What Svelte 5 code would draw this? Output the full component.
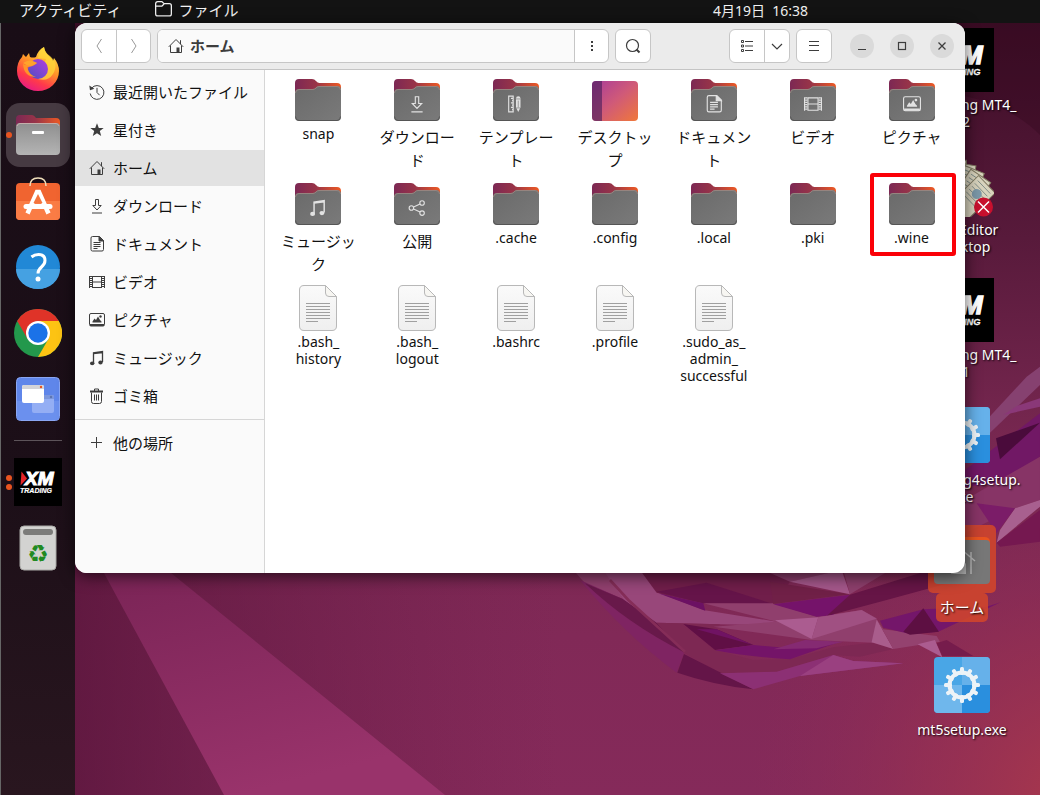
<script>
  const places = [
    { id: 'recent', icon: 'history', name: '最近開いたファイル' },
    { id: 'starred', icon: 'star', name: '星付き' },
    { id: 'home', icon: 'home', name: 'ホーム' },
    { id: 'downloads', icon: 'download', name: 'ダウンロード' },
    { id: 'documents', icon: 'doc', name: 'ドキュメント' },
    { id: 'videos', icon: 'film', name: 'ビデオ' },
    { id: 'pictures', icon: 'picture', name: 'ピクチャ' },
    { id: 'music', icon: 'music', name: 'ミュージック' },
    { id: 'trash', icon: 'trash', name: 'ゴミ箱' }
  ];

  const files = [
    { kind: 'folder', name: 'snap' },
    { kind: 'folder', emblem: 'download', name: 'ダウンロー\nド', cjk: true },
    { kind: 'folder', emblem: 'template', name: 'テンプレー\nト', cjk: true },
    { kind: 'desktop', name: 'デスクトッ\nプ', cjk: true },
    { kind: 'folder', emblem: 'doc', name: 'ドキュメン\nト', cjk: true },
    { kind: 'folder', emblem: 'film', name: 'ビデオ', cjk: true },
    { kind: 'folder', emblem: 'picture', name: 'ピクチャ', cjk: true },
    { kind: 'folder', emblem: 'music', name: 'ミュージッ\nク', cjk: true },
    { kind: 'folder', emblem: 'share', name: '公開', cjk: true },
    { kind: 'folder', name: '.cache' },
    { kind: 'folder', name: '.config' },
    { kind: 'folder', name: '.local' },
    { kind: 'folder', name: '.pki' },
    { kind: 'folder', name: '.wine', marked: true },
    { kind: 'text', name: '.bash_\nhistory' },
    { kind: 'text', name: '.bash_\nlogout' },
    { kind: 'text', name: '.bashrc' },
    { kind: 'text', name: '.profile' },
    { kind: 'text', name: '.sudo_as_\nadmin_\nsuccessful' }
  ];

  const shortcuts = [
    { kind: 'xm', name: 'XMTrading MT4_\n02' },
    { kind: 'editor', name: 'MetaEditor\n.desktop' },
    { kind: 'xm', name: 'XMTrading MT4_\n01' },
    { kind: 'gear', name: 'xmtrading4setup.\nexe' },
    { kind: 'home', name: 'ホーム', cjk: true },
    { kind: 'gear', name: 'mt5setup.exe' }
  ];

  const dock = [
    { kind: 'firefox', name: 'Firefox', dots: 0 },
    { kind: 'files', name: 'ファイル', dots: 1 },
    { kind: 'software', name: 'Ubuntu Software', dots: 0 },
    { kind: 'help', name: 'ヘルプ', dots: 0 },
    { kind: 'chrome', name: 'Google Chrome', dots: 0 },
    { kind: 'windows', name: 'ウィンドウ', dots: 0 },
    { kind: 'separator', name: '', dots: 0 },
    { kind: 'xm', name: 'XM Trading', dots: 2 },
    { kind: 'bin', name: 'ゴミ箱', dots: 0 }
  ];

  const teeth = Array.from({ length: 12 }, (_, i) => i * 30);
  const notes = [0, 1, 2, 3, 4];
</script>

{#snippet glyph(name, x = 0, y = 0, size = 16)}
  <svg {x} {y} width={size} height={size} viewBox="0 0 16 16" fill="none" stroke="currentColor" stroke-width="1" aria-hidden="true">
    {#if name === 'history'}
      <path d="M2.6 4.2A6.9 6.9 0 1 1 1.2 9.5M8 3.8V8.5L10.6 11.2" />
      <path d="M.3 1.6 1 6.2 5.4 4.8Z" fill="currentColor" stroke="none" />
    {:else if name === 'star'}
      <path d="M8 1.2 9.8 6h4.9L10.8 9l1.4 5L8 11.2 3.8 14l1.4-5L1.3 6h4.9Z" fill="currentColor" stroke="none" />
    {:else if name === 'home'}
      <path d="M.8 8.8 8 1.5l7.2 7.3M2.5 7.5v7h11v-7M12.5 2.2v4" />
      <path d="M8.5 9.5h3v5h-3z" fill="currentColor" stroke="none" />
    {:else if name === 'download'}
      <path d="M6.5 1.5h3v6h2.7L8 12 3.8 7.5h2.7ZM3 15h10" />
    {:else if name === 'doc'}
      <path d="M3.5.5h7L14.500 4.500V13.500q0 1.500-1.500 1.500H3.500q-1.500 0-1.500-1.500V2Q2 .5 3.500.5ZM4.500 6.500h7M4.500 8.500h7M4.500 10.500h7M4.500 12.500h4" />
      <path d="M10 .5v4.500h4.500Z" fill="currentColor" />
    {:else if name === 'film'}
      <path d="M.5 2v12M15.500 2v12M3.500 2v12M12.500 2v12M3.500 2.500h9M3.500 8h9M3.500 13.500h9" />
      <path d="M2 2v12M14 2v12" stroke-width="2" stroke-dasharray="1 1" />
    {:else if name === 'picture'}
      <rect x=".5" y="1.500" width="15" height="12.500" rx="1.500" />
      <path d="M1 12h14v2H1zM3.500 10.500v-1l2-3 1.500 1.500L9 4.500l2 3.500 1.500 1.500v1z" fill="currentColor" stroke="none" />
      <circle cx="11.500" cy="4.500" r="1.200" fill="currentColor" stroke="none" />
    {:else if name === 'music'}
      <path d="M4.500 13V2.700L13.500 1.500V12M4.500 3.500l9-1" stroke-width="1.300" />
      <ellipse cx="3.200" cy="13.300" rx="2.200" ry="1.900" fill="currentColor" stroke="none" />
      <ellipse cx="11.500" cy="12.500" rx="2.200" ry="1.900" fill="currentColor" stroke="none" />
    {:else if name === 'trash'}
      <path d="M2.500 4.500v9q0 2 2 2h6q2 0 2-2v-9M5.500 6.500v6M7.500 6.500v6M9.500 6.500v6M5.500 3V1h4v2" />
      <path d="M1 3.500h13" stroke-width="2" />
    {:else if name === 'plus'}
      <path d="M7.500 2v11M2 7.500h11" />
    {:else if name === 'template'}
      <path d="M1.500 1h4v14h-4zM3.500 3h2M4.500 5h1M3.500 7h2M4.500 9h1M3.500 11h2M4.500 13h1" />
      <path d="M8 3q0-2 2-2t2 2v8l-2 4-2-4z" fill="currentColor" stroke="none" />
      <path d="M8 3.500h4M8 11.500h4M10 5v6" stroke="#777" stroke-width=".6" />
    {:else if name === 'share'}
      <circle cx="3" cy="8" r="2" /><circle cx="12.500" cy="3.500" r="2" /><circle cx="12.500" cy="12.500" r="2" />
      <path d="m5 7.200 5.700-2.700M5 8.800l5.700 2.700" />
    {:else if name === 'back'}
      <path d="M10.500 1 6 8l4.500 7" />
    {:else if name === 'forward'}
      <path d="M5.500 1 10 8l-4.500 7" />
    {:else if name === 'dots'}
      <path d="M7 3h2v2H7zM7 7h2v2H7zM7 11h2v2H7z" fill="currentColor" stroke="none" />
    {:else if name === 'search'}
      <circle cx="7.500" cy="7.500" r="6" stroke-width="1.200" /><path d="m11.500 11.500 3 3" stroke-width="2" />
    {:else if name === 'list'}
      <path d="M2.500 2.500h2v2h-2zM2.500 7h2v2h-2zM2.500 11.500h2v2h-2zM6 3.500h8M6 8h8M6 12.500h8" />
    {:else if name === 'chevron'}
      <path d="m3 6 5 5 5-5" stroke-width="1.200" />
    {:else if name === 'menu'}
      <path d="M3 3.500h10M3 7.500h10M3 12.500h10" />
    {:else if name === 'minimize'}
      <path d="M4 11.500h8" />
    {:else if name === 'maximize'}
      <rect x="4.500" y="4.500" width="7" height="7" stroke-width="1.200" />
    {:else if name === 'close'}
      <path d="m4.500 4.500 7 7m0-7-7 7" stroke-width="1.300" />
    {:else if name === 'folder'}
      <path d="M.6 3.600Q.6 1.500 2.600 1.500H6.500l2 2h5q1.900 0 1.900 2v7.600q0 1.900-1.900 1.900H2.600q-2 0-2-1.900ZM.8 5.800H6.500l2-2" stroke-width="1.200" />
    {/if}
  </svg>
{/snippet}

{#snippet xmLogo(size)}
  <svg width={size} height={size} viewBox="0 0 48 48" aria-hidden="true">
    <path d="M0 0h48v48H0z" fill="#000" />
    <path d="M7.500 13.500 13 20.500 6.500 27.500Z" fill="#e4252b" />
    <text class="logo" x="11" y="27" font-size="19" fill="#fff" stroke="#fff" stroke-width="1.100">XM</text>
    <text class="logo" x="6" y="35" font-size="7" fill="#fff" stroke="#fff" stroke-width=".2">TRADING</text>
  </svg>
{/snippet}

{#snippet folder(emblem)}
  <svg width="48" height="48" viewBox="0 0 48 48" aria-hidden="true">
    <path d="M1 7q0-4 4-4h13q2.500 0 4 2t3.500 2H43q4 0 4 4v14H1Z" fill="url(#folder-back)" />
    <path d="M1 17q0-4 4-4h14c3 0 3-3 6-3h18q4 0 4 4V41q0 4-4 4H5q-4 0-4-4Z" fill="url(#folder-front)" />
    <path d="M1.500 17q0-3.500 3.500-3.500h14c3 0 3-3 6-3h18q3.500 0 3.500 3.500" fill="none" stroke="#96847f" />
    <path d="M1.500 40.500q0 4 3.500 4h38q3.500 0 3.500-4" fill="none" stroke="#555" />
    {#if emblem}<g color="#e2e2e2">{@render glyph(emblem, 15, 19, 18)}</g>{/if}
  </svg>
{/snippet}

<div class="screen">
  <svg class="wallpaper" viewBox="0 0 1040 795" preserveAspectRatio="none" aria-hidden="true">
    <defs>
      <linearGradient id="sky" x1="0" y1="0" x2="0" y2="1">
        <stop offset="0" stop-color="#3a0c24" /><stop offset=".3" stop-color="#581a3b" />
        <stop offset=".55" stop-color="#772750" /><stop offset=".8" stop-color="#812957" /><stop offset="1" stop-color="#852a5a" />
      </linearGradient>
      <radialGradient id="glow" gradientUnits="userSpaceOnUse" cx="1080" cy="800" r="330">
        <stop offset="0" stop-color="#aa384c" /><stop offset=".5" stop-color="#9c3250" stop-opacity=".55" /><stop offset="1" stop-color="#8c2c58" stop-opacity="0" />
      </radialGradient>
      <linearGradient id="shade" x1="0" y1="0" x2="1" y2="0">
        <stop offset="0" stop-color="#4f1034" stop-opacity=".8" /><stop offset="1" stop-color="#6a1d48" stop-opacity="0" />
      </linearGradient>
      <linearGradient id="beam" x1="0" y1="0" x2=".4" y2="1">
        <stop offset="0" stop-color="#7a2456" /><stop offset="1" stop-color="#99336b" />
      </linearGradient>
      <linearGradient id="folder-back" x1="0" y1="0" x2="1" y2="0">
        <stop offset="0" stop-color="#7c2854" /><stop offset=".45" stop-color="#983448" /><stop offset="1" stop-color="#ee5a24" />
      </linearGradient>
      <linearGradient id="folder-front" x1="0" y1="0" x2="1" y2="1">
        <stop offset="0" stop-color="#6a6a6a" /><stop offset="1" stop-color="#7a7a7a" />
      </linearGradient>
      <linearGradient id="desk" x1="0" y1="0" x2="1" y2="1">
        <stop offset="0" stop-color="#a93c9a" /><stop offset=".5" stop-color="#d05a78" /><stop offset="1" stop-color="#f0783a" />
      </linearGradient>
      <linearGradient id="paper" x1="0" y1="0" x2="0" y2="1">
        <stop offset="0" stop-color="#fafafa" /><stop offset="1" stop-color="#efefef" />
      </linearGradient>
      <linearGradient id="flame" x1=".8" y1="0" x2=".3" y2="1">
        <stop offset="0" stop-color="#fff04a" /><stop offset=".45" stop-color="#ff9328" /><stop offset=".75" stop-color="#ff3a4a" /><stop offset="1" stop-color="#e81a86" />
      </linearGradient>
      <linearGradient id="globe" x1="1" y1="0" x2="0" y2="1">
        <stop offset="0" stop-color="#b43ce0" /><stop offset="1" stop-color="#4b4fc0" />
      </linearGradient>
      <linearGradient id="grey" x1="0" y1="0" x2="0" y2="1">
        <stop offset="0" stop-color="#8f8f8f" /><stop offset="1" stop-color="#b4b4b4" />
      </linearGradient>
    </defs>
    <path d="M0 0h1040v795H0z" fill="url(#sky)" />
    <path d="M960 95Q1010 105 1040 135V0H960z" fill="#300719" opacity=".3" />
    <path d="M0 500h560v295H0z" fill="url(#shade)" />
    <path d="M104 573h67l274 222H224z" fill="url(#beam)" />
    <path d="M700 400h340v395H700z" fill="url(#glow)" />
    <g transform="translate(560 560) scale(.3333)">
      <path d="M40 30H140L190 118 75 70Z" fill="#92406f" />
      <path d="M60 60 190 118 372 278 350 338Q190 220 60 60" fill="#7f2462" />
      <path d="M75 70 190 118 290 188 372 277Q200 190 75 70" fill="#68194a" />
      <path d="M130 30H240L300 100 430 150 650 185 600 195 480 193 290 188 190 118Z" fill="#98477a" />
      <path d="M290 188 480 193 470 208 370 195 465 270 580 300 690 298 820 262 935 248 1000 267 900 290 820 285 650 335 480 340 372 278Z" fill="#7d2853" />
      <path d="M150 60 205 120 375 275" fill="none" stroke="#852d58" stroke-width="8" />
      <path d="M372 282 352 338Q460 375 580 388Z" fill="#641548" />
      <path d="M480 340 650 335 820 285 880 303 1030 310 720 348 580 388Z" fill="#8c3074" />
      <path d="M720 348 820 285 880 303 1030 310Z" fill="#9a4080" />
      <path d="M370 192 470 208 580 255 465 270Z" fill="#600f45" />
      <path d="M410 208h60l110 47Z" fill="#701363" />
      <path d="M465 271 580 255 690 265 840 245 690 298Q560 290 465 271" fill="#741468" />
      <path d="M650 265 735 240 850 245 770 265 640 268Z" fill="#852a72" />
      <path d="M240 30H700L690 65 640 132 430 130 290 98Z" fill="#701e4a" />
      <path d="M290 95 440 68 640 132 430 130Z" fill="#651449" />
      <path d="M295 100 430 130 436 152Z" fill="#6c1163" />
      <path d="M430 130H640L770 170 905 150 950 175 940 248 755 240 460 200 650 185Z" fill="#903f6d" />
      <path d="M630 65 870 103 640 132Z" fill="#702047" />
      <path d="M640 133 870 104 820 165 770 170Z" fill="#75136a" />
      <path d="M870 104 1110 30 1200 60 980 120 800 168Z" fill="#661546" />
      <path d="M610 30H850L690 65Z" fill="#8b3d6c" />
      <path d="M690 65 845 30 870 103Z" fill="#a4578a" />
      <path d="M850 30H990L870 103Z" fill="#8d3f6c" />
      <path d="M645 181 775 172 755 237Z" fill="#ab5c90" />
      <path d="M775 172 905 150 950 176 755 237Z" fill="#a05082" />
      <path d="M950 178 935 247 1000 267Z" fill="#a95d8c" />
      <path d="M950 178 970 208 1130 228 1140 245 1000 267Z" fill="#94426f" />
      <path d="M960 182 1090 148 1280 140 1322 127 1135 215 1050 222 970 203Z" fill="#74166a" />
      <path d="M1090 145 1137 215 1050 224 1030 215Z" fill="#5d0f42" />
      <path d="M1073 253 1125 240 1147 292Z" fill="#ab5c90" />
      <path d="M1130 250 1160 240 1240 288H1147Z" fill="#761c4c" />
    </g>
    <g transform="translate(900 270) scale(.3333)">
      <path d="M420 290 380 320 195 520V560L420 345Z" fill="#864170" />
      <path d="M310 435 350 408 420 385V410Z" fill="#8a3878" />
      <path d="M195 600 420 430V560L300 640 195 650Z" fill="#711865" />
      <path d="M288 505 420 458 300 568Z" fill="#4a0b3b" />
      <path d="M195 690 420 560V690L345 715 195 790Z" fill="#873466" />
      <path d="M345 715 420 690V710L290 818 300 780Z" fill="#a8608f" />
      <path d="M230 700 345 715 290 790Z" fill="#7b1c68" />
      <path d="M290 818 420 720V815L300 830Z" fill="#751850" />
    </g>
  </svg>

  <header class="topbar">
    <button class="plain">アクティビティ</button>
    <button class="plain app">{@render glyph('folder', 0, 0, 17)}ファイル</button>
    <button class="plain clock">4月19日&nbsp; 16:38</button>
  </header>

  <div class="body">
    <nav class="dock" aria-label="Dock">
      {#each dock as app}
        {#if app.kind === 'separator'}
          <hr />
        {:else}
          <button class="slot" class:active={app.kind === 'files'} aria-label={app.name}>
            {#if app.dots}
              <span class="dots">{#each notes.slice(0, app.dots) as n (n)}<i></i>{/each}</span>
            {/if}
            {#if app.kind === 'xm'}
              {@render xmLogo(48)}
            {:else}
              <svg width="48" height="48" viewBox="0 0 48 48" aria-hidden="true">
                {#if app.kind === 'firefox'}
                  <path d="M3 26Q3 17 8 12L9 9l3 3 3-4 1 4q3 1 6 0Q24 5 30 2q1 6 5 9 3 2 4 5l1-3q5 6 5 13A21 20 0 0 1 3 26" fill="url(#flame)" />
                  <path d="M30 2q1 6 6 9 9 8 3 18-5 8-15 5l8-20-8-1Q25 5 30 2" fill="#ffd83a" opacity=".75" />
                  <circle cx="24" cy="24" r="10" fill="url(#globe)" />
                  <path d="M11 20q6-5 12-2-4 4-10 4 2 8 9 10-12 0-13-13z" fill="#ff9528" />
                  <path d="M9 18q7-5 14 0l-6 3q-4 0-8-3" fill="#ffa32c" />
                {:else if app.kind === 'files'}
                  <path d="M2 8q0-4 4-4h12q2 0 4 3h20q4 0 4 4v16H2Z" fill="url(#folder-back)" />
                  <rect x="2" y="12" width="44" height="32" rx="4" fill="url(#grey)" />
                  <path d="M3 15q1-2.500 3-2.500h36q2 0 3 2.500" fill="none" stroke="#c4aeaa" />
                  <rect x="18" y="20" width="12" height="3" rx="1" fill="#fff" />
                {:else if app.kind === 'software'}
                  <rect x="2" y="6" width="44" height="37" rx="4" fill="#f06430" />
                  <path d="M2 24h44v15q0 4-4 4H6q-4 0-4-4Z" fill="#fa7c45" />
                  <path d="M16 9Q16 1 24 1t8 8" fill="none" stroke="#f0dfbb" stroke-width="1.500" />
                  <path d="M12 29.500h24" stroke="#fff" stroke-width="5" stroke-linecap="round" />
                  <path d="M13.500 36.500 23 15h2l9.500 21.500" fill="none" stroke="#fff" stroke-width="4.500" />
                  <path d="M19.500 26h9L24 17z" fill="#f4753e" />
                {:else if app.kind === 'help'}
                  <circle cx="24" cy="24" r="22" fill="#2188d6" />
                  <path d="M2 26a22 20 0 0 0 44 0Z" fill="#45a1e2" />
                  <path d="M17.500 14q3-2.500 7-2.500 6.500 0 6.500 6 0 3.500-3.500 6.500T24 30.500" fill="none" stroke="#fff" stroke-width="3" />
                  <circle cx="24" cy="36" r="2.500" fill="#fff" />
                {:else if app.kind === 'chrome'}
                  <circle cx="24" cy="24" r="24" fill="#23984c" />
                  <path d="M24 24 3.200 12A24 24 0 0 1 44.800 12Z" fill="#df3328" />
                  <path d="M3.200 12 13.600 30 24 24 24 12Z" fill="#df3328" />
                  <path d="M44.800 12A24 24 0 0 1 24 48L34.400 30 24 12Z" fill="#fdc313" />
                  <circle cx="24" cy="24" r="12" fill="#fff" /><circle cx="24" cy="24" r="9.700" fill="#1b72e8" />
                {:else if app.kind === 'windows'}
                  <rect x="2.500" y="2.500" width="43" height="43" rx="4" fill="#5f86ea" stroke="#8aa6f3" />
                  <path d="M3 26h42v16q0 3-3 3H6q-3 0-3-3Z" fill="#6b90ee" />
                  <rect x="18" y="20" width="22" height="18" rx="2" fill="#94aef4" /><path d="M18 24v-2q0-2 2-2h18q2 0 2 2v2Z" fill="#7c97dd" />
                  <rect x="8" y="10" width="22" height="18" rx="2" fill="#fff" /><path d="M8 14v-2q0-2 2-2h18q2 0 2 2v2Z" fill="#d4d4d8" />
                  <circle cx="27" cy="12" r="1.200" fill="#e95420" /><circle cx="37" cy="22" r="1.200" fill="#5d74b0" />
                {:else if app.kind === 'bin'}
                  <rect x="6" y="2" width="36" height="44" rx="4" fill="#d3d3d1" stroke="#a9a9a6" />
                  <rect x="9" y="5" width="30" height="6" rx="3" fill="#7c7c7a" />
                  <text class="recycle" x="24" y="38" text-anchor="middle" font-size="24" fill="#218a21">♻</text>
                {/if}
              </svg>
            {/if}
          </button>
        {/if}
      {/each}
    </nav>

    <main class="desktop">
      <div class="shortcuts">
        {#each shortcuts as item}
          <button class="shortcut" class:selected={item.kind === 'home'}>
            <span class="picture">
              {#if item.kind === 'xm'}
                {@render xmLogo(64)}
              {:else}
                <svg width="64" height="64" viewBox="0 0 64 64" aria-hidden="true">
                  {#if item.kind === 'gear'}
                    <rect x="4" y="4" width="56" height="56" rx="4" fill="#49a6e6" />
                    <path d="M32 4h24q4 0 4 4v24H32z" fill="#66b1ea" /><path d="M4 32h28v28H8q-4 0-4-4z" fill="#6fb7ec" />
                    <path d="M32 32h28v24q0 4-4 4H32z" fill="#2a8fde" />
                    {#each teeth as a}<rect x="30" y="14" width="4" height="8" rx="1.500" fill="#edf3f7" transform="rotate({a} 32 32)" />{/each}
                    <circle cx="32" cy="32" r="12.500" fill="none" stroke="#edf3f7" stroke-width="4" />
                  {:else if item.kind === 'editor'}
                    {#each notes as n}
                      <g transform="rotate({n * 12 - 2} 14 56)">
                        <rect x="14" y="8" width="24" height="42" fill="#d8d3bd" stroke="#807a62" />
                        <path d="M17 12h18M17 16h18M17 20h18M17 24h18M17 28h18M17 32h18" stroke="#73837f" stroke-width=".8" />
                        <circle cx="26" cy="22" r="5" fill="#7b98a8" />
                      </g>
                    {/each}
                    <circle cx="53.500" cy="54" r="9.500" fill="#c8102e" /><path d="m48 48.500 11 11m0-11-11 11" stroke="#fff" stroke-width="1.500" />
                  {:else}
                    <path d="M4 12q0-5 5-5h16l5 3h24q6 0 6 5v20H4Z" fill="#e95420" />
                    <rect x="4" y="13" width="56" height="44" rx="4" fill="#777" />
                    <path d="M22 47V34L32 23 45 34M41 25v22" fill="none" stroke="#b4b4b4" stroke-width="1.500" />
                    <path d="M22 47 36 36v11z" fill="#b4b4b4" />
                  {/if}
                </svg>
              {/if}
            </span>
            <span class="caption" class:cjk={item.cjk}>{item.name}</span>
          </button>
        {/each}
      </div>

      <section class="window" aria-label="ホーム">
        <div class="headerbar">
          <div class="group">
            <button class="dim" aria-label="戻る">{@render glyph('back')}</button>
            <button class="dim" aria-label="進む">{@render glyph('forward')}</button>
          </div>
          <div class="group path">
            <button class="location">{@render glyph('home')}<b>ホーム</b></button>
            <button aria-label="場所メニュー">{@render glyph('dots')}</button>
          </div>
          <div class="group search"><button aria-label="検索">{@render glyph('search')}</button></div>
          <div class="group">
            <button aria-label="リスト表示">{@render glyph('list')}</button>
            <button class="narrow" aria-label="表示オプション">{@render glyph('chevron')}</button>
          </div>
          <div class="group"><button aria-label="メニュー">{@render glyph('menu')}</button></div>
          <div class="controls">
            <button aria-label="最小化">{@render glyph('minimize')}</button>
            <button aria-label="最大化">{@render glyph('maximize')}</button>
            <button aria-label="閉じる">{@render glyph('close')}</button>
          </div>
        </div>
        <div class="content">
          <nav class="sidebar" aria-label="場所">
            {#each places as place}
              <a href="#{place.id}" class:current={place.id === 'home'}>{@render glyph(place.icon)}{place.name}</a>
            {/each}
            <hr />
            <a href="#other">{@render glyph('plus')}他の場所</a>
          </nav>
          <div class="files">
            {#each files as file}
              <button class="file" class:marked={file.marked}>
                {#if file.kind === 'folder'}
                  {@render folder(file.emblem)}
                {:else if file.kind === 'desktop'}
                  <svg width="48" height="48" viewBox="0 0 48 48" aria-hidden="true">
                    <rect x="1" y="5" width="46" height="40" rx="4" fill="url(#desk)" />
                    <path d="M5 5h6v40H5q-4 0-4-4V9q0-4 4-4" fill="#4e205c" opacity=".65" />
                  </svg>
                {:else}
                  <svg width="48" height="48" viewBox="0 0 48 48" aria-hidden="true">
                    <path d="M9.500 1.500h22l11 11V42q0 4.500-4.500 4.500H10q-4.500 0-4.500-4.500V6q0-4.500 4.500-4.500" fill="url(#paper)" stroke="#b8b8b8" />
                    <path d="M31.500 1.500V9q0 3.500 3.500 3.500h7.500Z" fill="#f7f6f2" stroke="#b8b8b8" />
                    <path d="M12 19.500h24M12 22.500h24M12 25.500h24M12 28.500h24M12 31.500h24M12 34.500h24M12 37.500h12" stroke="#a0a0a0" />
                  </svg>
                {/if}
                <span class:cjk={file.cjk}>{file.name}</span>
              </button>
            {/each}
          </div>
        </div>
      </section>
    </main>
  </div>
</div>

<style>
  :global(body) { margin: 0; }
  .screen {
    position: relative;
    display: flex;
    flex-direction: column;
    min-height: 100vh;
    overflow: hidden;
    font: 15px/23px "Noto Sans CJK JP", sans-serif;
    color: #111;
  }
  .wallpaper { position: absolute; inset: 0; width: 100%; height: 100%; }
  button { font: inherit; color: inherit; border: 0; padding: 0; margin: 0; background: none; }
  hr { border: 0; margin: 0; }
  svg { display: block; flex: none; }
  .logo { font-family: "Liberation Sans", sans-serif; font-weight: bold; font-style: italic; }
  .recycle { font-family: "DejaVu Sans", sans-serif; }

  .topbar {
    position: relative;
    display: flex;
    align-items: flex-start;
    height: 23px;
    padding: 0 232px 0 19px;
    background: #131313;
    color: #f2f2f2;
  }
  .plain { display: flex; align-items: flex-start; line-height: 20px; white-space: nowrap; }
  .app { gap: 6px; margin-left: 34px; }
  .clock { margin-left: auto; font-family: "Noto Sans", "Noto Sans CJK JP", sans-serif; font-size: 14px; line-height: 22px; }

  .body { position: relative; display: flex; flex: 1; }
  .dock {
    box-sizing: border-box;
    width: 75px;
    padding: 14px 5px 0;
    border-left: 1px solid #666;
    background: linear-gradient(#190d16, #1c0f18 60%, #29161f);
    display: flex;
    flex-direction: column;
    gap: 2px;
  }
  .slot {
    position: relative;
    display: flex;
    align-items: center;
    justify-content: center;
    width: 64px;
    height: 64px;
    border-radius: 14px;
  }
  .active { background: #463a42; }
  .dots { position: absolute; left: 0; display: flex; flex-direction: column; gap: 3px; }
  .dots i { width: 6px; height: 6px; border-radius: 50%; background: #e95420; }
  .dock hr { height: 1px; margin: 7px 8px; background: #5d545a; }

  .desktop { position: relative; flex: 1; }
  .shortcuts {
    position: absolute;
    top: 5px;
    right: 8px;
    width: 140px;
    display: grid;
    grid-auto-rows: 125px;
  }
  .shortcut { display: flex; flex-direction: column; align-items: center; color: #fff; }
  .picture { border-radius: 5px; }
  .caption {
    margin-top: 4px;
    font: 14px/17px "Noto Sans", sans-serif;
    white-space: pre-line;
    text-shadow: 1px 1px 2px #000;
  }
  .caption.cjk { font: 15px/23px "Noto Sans CJK JP", sans-serif; }
  .selected .picture { padding: 2px; margin-top: -3px; background: rgb(211 70 42 / 85%); }
  .selected .caption { margin-top: 0; padding: 2px 4px 4px; border-radius: 5px; background: rgb(211 70 42 / 85%); }

  .window {
    position: absolute;
    top: 0;
    left: 0;
    width: 890px;
    border-radius: 12px;
    overflow: hidden;
    display: flex;
    flex-direction: column;
    min-height: 550px;
    background: #fff;
    box-shadow: 0 3px 16px rgb(0 0 0 / 65%);
  }
  .headerbar {
    display: flex;
    align-items: center;
    gap: 6px;
    height: 46px;
    padding: 0 11px 0 6px;
    background: #ebebeb;
    border-bottom: 1px solid #c4c4c4;
    color: #3d3d3d;
  }
  .group {
    display: flex;
    border: 1px solid #c6c6c6;
    border-radius: 6px;
    background: #fff;
    overflow: hidden;
  }
  .group button { display: flex; align-items: center; justify-content: center; width: 34px; height: 32px; }
  .group button + button { border-left: 1px solid #c6c6c6; }
  .group .dim { color: #999; }
  .group .narrow { width: 25px; }
  .path { flex: 1; }
  .path .location { flex: 1; justify-content: flex-start; gap: 6px; padding-left: 10px; background: #fafafa; }
  .location b { padding-bottom: 2px; }
  .search { margin-right: 72px; }
  .controls { display: flex; gap: 16px; margin-left: 12px; }
  .controls button {
    width: 24px;
    height: 24px;
    display: flex;
    align-items: center;
    justify-content: center;
    border-radius: 50%;
    background: #dadada;
  }
  .content { display: flex; flex: 1; }
  .sidebar {
    display: flex;
    flex-direction: column;
    gap: 2px;
    width: 189px;
    padding-top: 4px;
    background: #fafafa;
    border-right: 1px solid #d6d6d6;
  }
  .sidebar a {
    display: flex;
    align-items: center;
    gap: 8px;
    height: 34px;
    padding: 0 0 2px 14px;
    color: inherit;
    text-decoration: none;
    white-space: nowrap;
  }
  .sidebar a svg { margin-top: 2px; color: #3d3d3d; }
  .sidebar .current { background: #e2e2e2; }
  .sidebar hr { height: 1px; margin: 3px 0; background: #d6d6d6; }
  .files {
    flex: 1;
    display: grid;
    grid-template-columns: repeat(7, 1fr);
    align-content: start;
    gap: 9px 0;
    padding: 6px 4px;
  }
  .file {
    position: relative;
    display: flex;
    flex-direction: column;
    align-items: center;
    justify-content: flex-start;
    gap: 1px;
    font: 14px/17px "Noto Sans", sans-serif;
    white-space: pre-line;
  }
  .file .cjk { font: 15px/23px "Noto Sans CJK JP", sans-serif; }
  .marked::after {
    content: "";
    position: absolute;
    box-sizing: border-box;
    top: -7px;
    left: 8px;
    width: 86px;
    height: 83px;
    border: 4px solid #fb0007;
    border-radius: 3px;
  }
</style>
